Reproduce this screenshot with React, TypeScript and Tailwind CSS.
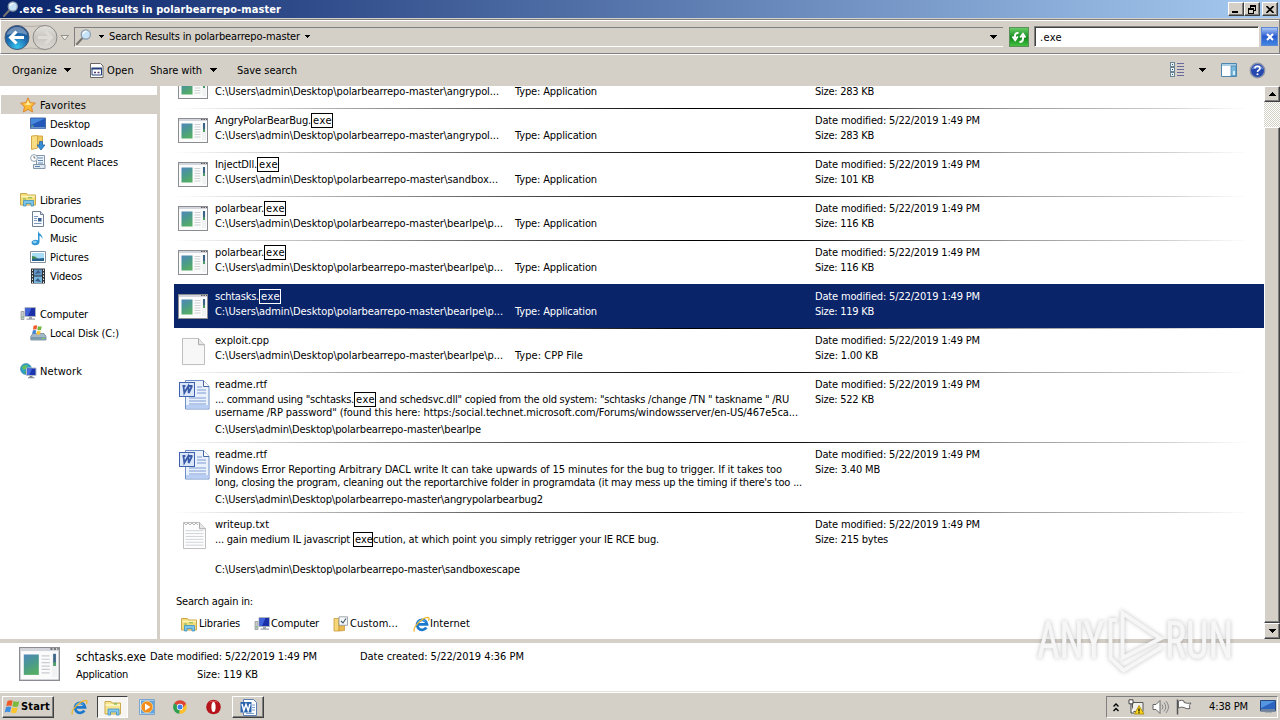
import { useLayoutEffect, useRef, type ReactNode } from "react";

/* Single line of text whose tracking is tuned so that it fills `w` pixels. */
function T({ w, children, className = "" }: { w?: number; children: string; className?: string }) {
  const ref = useRef<HTMLSpanElement>(null);
  useLayoutEffect(() => {
    const el = ref.current;
    if (!el || !w) return;
    el.style.letterSpacing = "0px";
    const natural = el.getBoundingClientRect().width;
    el.style.letterSpacing = `${(w - natural) / children.length}px`;
  }, [w, children]);
  return (
    <span ref={ref} className={`inline-block shrink-0 whitespace-pre ${className}`}>
      {children}
    </span>
  );
}

function Caret({ className = "" }: { className?: string }) {
  return (
    <svg width="7" height="4" viewBox="0 0 7 4" shapeRendering="crispEdges" className={`shrink-0 ${className}`}>
      <path d="M0 0h7L3.500 4z" fill="#000" />
    </svg>
  );
}

function AppIcon({ className = "" }: { className?: string }) {
  return (
    <svg viewBox="0 0 30 25" preserveAspectRatio="none" className={`shrink-0 ${className}`}>
      <defs>
        <linearGradient id="appg" x1="0" y1="0" x2="0.4" y2="1">
          <stop offset="0" stopColor="#4f86bd" />
          <stop offset="0.55" stopColor="#4a9a8c" />
          <stop offset="1" stopColor="#55ab68" />
        </linearGradient>
      </defs>
      <rect x="0.5" y="0.5" width="29" height="24" fill="#fbfbfb" stroke="#8b8d92" />
      <rect x="1" y="1" width="28" height="2" fill="#d3d6dc" />
      <path d="M23 1.500h1.500M25.500 1.500H27M28 1.500h1" stroke="#555" />
      <rect x="3.500" y="5.500" width="11" height="15" fill="url(#appg)" />
      <path d="M16.500 6.500h6M16.500 9h6M16.500 11.500h6M16.500 14h6M16.500 16.500h6M16.500 19h6" stroke="#c9ccd0" strokeWidth="0.9" />
      <rect x="24" y="5" width="4" height="17" fill="#f1f2f4" />
      <rect x="25" y="5" width="2" height="7" fill="#3c6488" />
      <rect x="25" y="11" width="2" height="3" fill="#4b9a68" />
    </svg>
  );
}

function FileIcon({ lines = false }: { lines?: boolean }) {
  return (
    <svg width="25" height="29" viewBox="0 0 25 30" preserveAspectRatio="none" className="shrink-0">
      <path d="M1.500 1.500h16l6 6.500v20.500h-22z" fill={lines ? "#fdfdfd" : "#f7f7f7"} stroke="#bdbdbd" />
      <path d="M17.500 1.500v6.500h6" fill="#e6e6e6" stroke="#a9a9a9" />
      {lines && (
        <>
          <path d="M3.500 10h18M3.500 13h18M3.500 16h18M3.500 19h18M3.500 22h18M3.500 25h18" stroke="#cfd3d8" />
          <path d="M2 2l2 2 2-2 2 2 2-2 2 2 2-2 2 2" stroke="#999" fill="none" strokeWidth="0.8" />
        </>
      )}
    </svg>
  );
}

function WordDoc() {
  return (
    <svg width="31" height="31" viewBox="0 0 31 31" className="shrink-0">
      <path d="M6.500 1.500h18l5.500 6v22.500h-23.500z" fill="#eaf1fc" stroke="#6f8fc6" />
      <path d="M7 26h22.500v3.500H7z" fill="#b9cff3" />
      <path d="M24.500 1.500v6h5.500" fill="#fff" stroke="#44659f" />
      <path d="M18 8h5M18 11h9M18 14h9M10 19h17M10 22h17M10 25h17" stroke="#7d9cd6" />
      <rect x="0.500" y="3.500" width="15" height="14" fill="#dce7fa" stroke="#3e62ac" />
      <path d="M3.500 7h3M9 7h4.500M4.500 7l.8 7 4-7 .4 7L13 7" fill="none" stroke="#3a5ba8" strokeWidth="1.800" />
    </svg>
  );
}

function Magnifier() {
  return (
    <svg width="16" height="16" viewBox="0 0 16 16" className="shrink-0">
      <path d="M1 15l5.500-6" stroke="#77736e" strokeWidth="2" strokeLinecap="round" />
      <circle cx="9.800" cy="5.500" r="4.600" fill="#c7e3f8" stroke="#8a9aab" strokeWidth="1.200" />
      <path d="M7 5a3 3 0 0 1 3.500-2.500" stroke="#fff" fill="none" strokeWidth="1.200" />
    </svg>
  );
}

function Star() {
  return (
    <svg width="16" height="16" viewBox="0 0 16 16" className="shrink-0">
      <path d="M8 .8l2.200 4.800 5.200.6-3.900 3.500 1.100 5.300L8 12.400 3.400 15l1.100-5.300L.6 6.200l5.200-.6z" fill="#fcb933" stroke="#d9822b" strokeWidth="0.900" />
      <path d="M8 3l1.400 3.500 3 .3-4 1.400-4.600-1.200 3-.5z" fill="#fff0a6" />
    </svg>
  );
}

function DesktopIcon() {
  return (
    <svg width="16" height="16" viewBox="0 0 16 16" className="shrink-0">
      <path d="M.5 2h15v10.500H.5z" fill="#2458b8" stroke="#4a6aa4" />
      <path d="M1 2.500h14L1 9z" fill="#4688dc" />
      <path d="M1 11h14v1.500H1z" fill="#6c94cc" />
      <path d="M1.500 10h2" stroke="#8cd070" />
    </svg>
  );
}

function DownloadsIcon() {
  return (
    <svg width="16" height="16" viewBox="0 0 16 16" className="shrink-0">
      <path d="M1.500 1l6-.5V13l-6 1.500z" fill="#f9dd84" stroke="#d2a848" />
      <path d="M7.500 1h5v9h-5z" fill="#f2c95e" stroke="#d2a848" />
      <path d="M9.500 6.500h3V10H15l-4 5-4-5h2.500z" fill="#3a8fd4" stroke="#2468a8" strokeWidth="0.800" />
    </svg>
  );
}

function RecentIcon() {
  return (
    <svg width="17" height="16" viewBox="0 0 17 16" className="shrink-0">
      <path d="M6.500 1.500h8v10h-8z" fill="#eef4fa" stroke="#8295ab" />
      <path d="M8 4h5M8 6.500h5M8 9h5" stroke="#5e86b3" />
      <circle cx="4" cy="4" r="3.400" fill="#fff" stroke="#8fa2b4" />
      <path d="M4 2v2h1.500" stroke="#555" fill="none" strokeWidth="0.800" />
      <path d="M3.500 10.500h11.500v4H3.500z" fill="#dfe9f2" stroke="#8295ab" />
      <path d="M5 12.500h5" stroke="#5e86b3" />
    </svg>
  );
}

function LibrariesIcon() {
  return (
    <svg width="16" height="15" viewBox="0 0 16 15" className="shrink-0">
      <path d="M.5 1.500h6l1 1.500h8v10H.5z" fill="#f3dc7a" stroke="#c9a94c" />
      <path d="M1 4.500h14" stroke="#fff4b8" strokeWidth="1.500" />
      <path d="M3 7h3M8 5.800h4" stroke="#79b551" />
      <path d="M3.500 14V8.500h10V14H11v-2.500H6V14z" fill="#7cc5e8" stroke="#3f8fc0" strokeWidth="0.800" />
    </svg>
  );
}

function DocumentIcon() {
  return (
    <svg width="16" height="16" viewBox="0 0 16 16" className="shrink-0">
      <path d="M2.500.5h8l3 3v12h-11z" fill="#fafcff" stroke="#6f7f92" />
      <path d="M10.500.5v3h3" fill="#d5deea" stroke="#6f7f92" />
      <path d="M4 5.500h4M4 7.500h3M4 9.500h3M4 12.500h7.500" stroke="#7c98bb" />
      <rect x="8" y="7" width="3.500" height="3.500" fill="#3a5f92" />
    </svg>
  );
}

function MusicIcon() {
  return (
    <svg width="16" height="16" viewBox="0 0 16 16" className="shrink-0">
      <path d="M8 .5c0 3 5 3.500 4.500 8.500C11.800 7 10.500 6 9.500 5.800V12c0 2-2 3.300-4.300 3.300S1.500 14 1.500 12.600 3.300 9.800 5.500 9.800c.9 0 1.700.2 2.500.5z" fill="#2f96d6" />
      <ellipse cx="4.800" cy="12" rx="2" ry="1.200" fill="#8fd0f2" />
    </svg>
  );
}

function PicturesIcon() {
  return (
    <svg width="16" height="16" viewBox="0 0 16 16" className="shrink-0">
      <path d="M.5 2.500h15v11H.5z" fill="#fff" stroke="#8492a0" />
      <path d="M2 4h12v8H2z" fill="#a8dcf4" />
      <path d="M2 8l4 1 3 .6 5-.6v3H2z" fill="#27628e" />
      <path d="M2 7l3 .5 2.500 2L2 10z" fill="#428b56" />
    </svg>
  );
}

function VideosIcon() {
  return (
    <svg width="16" height="16" viewBox="0 0 16 16" className="shrink-0">
      <path d="M1 .500h14v15H1z" fill="#2e3338" />
      <path d="M4 1.500h8v6H4z" fill="#6298c9" />
      <path d="M4 8.500h8v6.500H4z" fill="#76b7df" />
      <path d="M5 6l3-4 3 3zM5 13l3-3 3 4z" fill="#3e5d82" />
      <path d="M2.500 1.500v14M13.500 1.500v14" stroke="#e5e8ea" strokeDasharray="1.500 1.500" />
    </svg>
  );
}

function ComputerIcon() {
  return (
    <svg width="17" height="16" viewBox="0 0 17 16" className="shrink-0">
      <path d="M1 5.500h3v8H1z" fill="#c8ccce" stroke="#878d92" strokeWidth="0.700" />
      <path d="M1.800 11h1.400" stroke="#4db748" />
      <path d="M5 1.500h10.500v9H5z" fill="#1b2fa8" stroke="#aab2c0" />
      <path d="M5.500 2h6L8 10H5.500z" fill="#3f62d8" />
      <path d="M9 11h3v1.500H9zM6.500 12.500h8.500v1.300H6.500z" fill="#9da3aa" />
    </svg>
  );
}

function DiskIcon() {
  return (
    <svg width="17" height="16" viewBox="0 0 17 16" className="shrink-0">
      <path d="M3 8.500h11l2 3v3.500H.8v-3.500z" fill="#a3b7c6" stroke="#6f8594" strokeWidth="0.800" />
      <path d="M1 12h14.800v2.600H1z" fill="#7c9aac" />
      <path d="M12 13.300h2.500" stroke="#7ce05f" />
      <path d="M3.500 1q2-1.200 3.700-.3L6.500 4.500Q4.800 3.700 3 4.700z" fill="#ee5a2a" />
      <path d="M8 1q2 1 3.800.2L11 5q-2 .8-3.700-.2z" fill="#74b840" />
      <path d="M2.800 5.500q1.800-.8 3.500 0L5.500 9q-1.700-.8-3.400 0z" fill="#3f84d8" />
      <path d="M7.100 5.700q1.800 1 3.700.2L10 9.300q-1.800.8-3.700-.2z" fill="#f9c22e" />
    </svg>
  );
}

function NetworkIcon() {
  return (
    <svg width="17" height="16" viewBox="0 0 17 16" className="shrink-0">
      <circle cx="6" cy="6" r="5.500" fill="#2fa0c8" stroke="#3c7f9a" strokeWidth="0.600" />
      <path d="M2 3.500q3-2 5.500-1.500L6 6 3 7z" fill="#63c05b" />
      <path d="M4 8l3 1-1 2.300z" fill="#4aa848" />
      <path d="M6.500 5h9.500v7.500H6.500z" fill="#1b35b0" stroke="#b5bdca" />
      <path d="M7 5.500h5L9.500 12H7z" fill="#476ade" />
      <path d="M9.500 13h3v1.200h-3zM8 14.200h6.500v1H8z" fill="#7f878f" />
    </svg>
  );
}

function CustomIcon() {
  return (
    <svg width="17" height="16" viewBox="0 0 17 16" className="shrink-0">
      <path d="M1 2.500h5V15H1z" fill="#f6d676" stroke="#c99b3c" strokeWidth="0.800" />
      <path d="M6 4h5.500v10.500L6 15z" fill="#e8ba4c" stroke="#c99b3c" strokeWidth="0.800" />
      <path d="M6 .8h8.500v8.500H6z" fill="#f3f7fa" stroke="#8c9299" strokeWidth="0.800" />
      <path d="M8 5l2 2 3-4.500" fill="none" stroke="#456" strokeWidth="1.100" />
    </svg>
  );
}

function IEIcon() {
  return (
    <svg width="17" height="17" viewBox="0 0 17 17" className="shrink-0">
      <path d="M13.300 11.500a5 5 0 1 1 .7-3.200H5" fill="none" stroke="#1c78cc" strokeWidth="2.800" />
      <path d="M4.500 6.500a5 5 0 0 1 8-1" fill="none" stroke="#5db4ee" strokeWidth="1" />
      <path d="M1.500 15.500C-1 12 9 1.500 14.800 1.300c1.800 0 1.400 2 .6 3.400" fill="none" stroke="#efb72e" strokeWidth="1.300" />
    </svg>
  );
}

function WindowsFlag() {
  return (
    <svg width="17" height="16" viewBox="0 0 17 16" className="shrink-0">
      <path d="M3.500 2q2.800-1.500 5.200-.3L7.500 7Q5 5.800 2.200 7.300z" fill="#ef5b28" />
      <path d="M9.500 2q2.500 1.300 5.800.2L14 7.500q-3 1-5.600-.2z" fill="#7cba3f" />
      <path d="M2 8.200q2.600-1.300 5.200-.2L6 13.200Q3.500 12 .7 13.500z" fill="#3d8ee0" />
      <path d="M8.100 8.300q2.600 1.200 5.600.2l-1.300 5.200q-3 1-5.500-.2z" fill="#fac52c" />
    </svg>
  );
}

const raised =
  "border border-t-white border-l-white border-r-[#404040] border-b-[#404040] shadow-[inset_-1px_-1px_0_#808080] bg-[#d4d0c8]";

function Hit({ narrow = false, light = false }: { narrow?: boolean; light?: boolean }) {
  return (
    <span
      className={`-my-px flex h-[15px] shrink-0 items-center border pl-px leading-[13px] ${narrow ? "w-5" : "w-[22px]"} ${light ? "border-white" : "border-black"}`}
    >
      <T w={narrow ? 18 : 19}>exe</T>
    </span>
  );
}

function Divider() {
  return <div className="h-px w-[1074px] shrink-0 bg-[linear-gradient(90deg,transparent,#666_28%,#000_48%,#111_58%,#999_78%,#ccc_92%,transparent)]" />;
}

type FileEntry = { name?: string; nameW?: number; path: string; pathW: number; size: string; sizeW: number; app?: boolean; type?: string; typeW?: number; selected?: boolean };

const base = "C:\\Users\\admin\\Desktop\\polarbearrepo-master\\";
const files: FileEntry[] = [
  { path: base + "angrypol...", pathW: 284, size: "283 KB", sizeW: 59, app: true },
  { name: "AngryPolarBearBug.", nameW: 96, path: base + "angrypol...", pathW: 284, size: "283 KB", sizeW: 59, app: true },
  { name: "InjectDll.", nameW: 42, path: base + "sandbox...", pathW: 283, size: "101 KB", sizeW: 59, app: true },
  { name: "polarbear.", nameW: 49, path: base + "bearlpe\\p...", pathW: 288, size: "116 KB", sizeW: 59, app: true },
  { name: "polarbear.", nameW: 49, path: base + "bearlpe\\p...", pathW: 288, size: "116 KB", sizeW: 59, app: true },
  { name: "schtasks.", nameW: 44, path: base + "bearlpe\\p...", pathW: 288, size: "119 KB", sizeW: 59, app: true, selected: true },
  { name: "exploit.cpp", nameW: 54, path: base + "bearlpe\\p...", pathW: 288, size: "1.00 KB", sizeW: 63, type: "CPP File", typeW: 68 },
];

function Meta({ size, w, dated = true }: { size: string; w: number; dated?: boolean }) {
  return (
    <div className="flex flex-col items-start">
      {dated ? <T w={165}>Date modified: 5/22/2019 1:49 PM</T> : <div className="h-[15px]" />}
      <T w={w}>{`Size: ${size}`}</T>
    </div>
  );
}

function FileRow({ f }: { f: FileEntry }) {
  return (
    <div className={`flex h-11 shrink-0 flex-col ${f.selected ? "bg-[#0a246a] text-white" : ""}`}>
      {f.selected ? <div className="h-px shrink-0" /> : <Divider />}
      <div className="flex pt-1 leading-[15px]">
        <div className={`w-[41px] shrink-0 ${f.app ? "pt-[5px] pl-1" : "pt-1 pl-[7px]"}`}>
          {f.app ? <AppIcon className="h-[25px] w-[30px]" /> : <FileIcon />}
        </div>
        <div className="flex w-[300px] shrink-0 flex-col items-start">
          <div className="flex h-[15px] items-center">
            {f.name && <T w={f.nameW}>{f.name}</T>}
            {f.name && f.app && <Hit light={f.selected} />}
          </div>
          <T w={f.pathW}>{f.path}</T>
        </div>
        <div className="flex w-[300px] shrink-0 pt-[15px]">
          <T w={f.typeW ?? 82}>{`Type: ${f.type ?? "Application"}`}</T>
        </div>
        <Meta size={f.size} w={f.sizeW} dated={!!f.name} />
      </div>
    </div>
  );
}

function LongRow({ icon, name, nameW, size, sizeW, children }: { icon: ReactNode; name: string; nameW: number; size: string; sizeW: number; children: ReactNode }) {
  return (
    <div className="flex h-[70px] shrink-0 flex-col">
      <Divider />
      <div className="flex pt-1 leading-[15px]">
        <div className="w-[41px] shrink-0">{icon}</div>
        <div className="flex w-[600px] shrink-0 flex-col items-start">
          <T w={nameW}>{name}</T>
          {children}
        </div>
        <Meta size={size} w={sizeW} />
      </div>
    </div>
  );
}

type NavItem = { label: string; w: number; icon: ReactNode; top?: boolean; active?: boolean } | null;
const nav: NavItem[] = [
  { label: "Favorites", w: 46, icon: <Star />, top: true, active: true },
  { label: "Desktop", w: 40, icon: <DesktopIcon /> },
  { label: "Downloads", w: 53, icon: <DownloadsIcon /> },
  { label: "Recent Places", w: 68, icon: <RecentIcon /> },
  null,
  { label: "Libraries", w: 41, icon: <LibrariesIcon />, top: true },
  { label: "Documents", w: 54, icon: <DocumentIcon /> },
  { label: "Music", w: 27, icon: <MusicIcon /> },
  { label: "Pictures", w: 39, icon: <PicturesIcon /> },
  { label: "Videos", w: 32, icon: <VideosIcon /> },
  null,
  { label: "Computer", w: 48, icon: <ComputerIcon />, top: true },
  { label: "Local Disk (C:)", w: 69, icon: <DiskIcon /> },
  null,
  { label: "Network", w: 42, icon: <NetworkIcon />, top: true },
];

function TitleBar() {
  return (
    <div className="flex h-[18px] shrink-0 items-center bg-[linear-gradient(90deg,#0a246a,#a6caf0)] pr-0.5 pl-[3px] text-white">
      <Magnifier />
      <T w={262} className="pt-0.5 leading-[16px] font-bold">.exe - Search Results in polarbearrepo-master</T>
      <div className="ml-auto flex h-3.5">
        <div className={`flex w-4 items-end justify-center pb-0.5 ${raised}`}>
          <div className="mr-0.5 h-0.5 w-1.5 bg-black" />
        </div>
        <div className={`flex w-4 items-center justify-center ${raised}`}>
          <svg width="9" height="9" viewBox="0 0 9 9" shapeRendering="crispEdges">
            <path d="M2.500 3V.5h5v5H6M2 1h6" fill="none" stroke="#000" />
            <path d="M.5 3.500h5v5h-5zM0 4h6" fill="none" stroke="#000" />
          </svg>
        </div>
        <div className={`ml-0.5 flex w-4 items-center justify-center ${raised}`}>
          <svg width="8" height="7" viewBox="0 0 8 7">
            <path d="M.5 0l7 7M7.500 0l-7 7" stroke="#000" strokeWidth="1.600" />
          </svg>
        </div>
      </div>
    </div>
  );
}

function AddressBar() {
  return (
    <div className="mt-px flex h-[35px] w-full shrink-0 items-center border border-[#808080] border-l-white shadow-[inset_0_1px_0_#fff,0_1px_0_#fff]">
      <svg width="73" height="30" viewBox="0 0 73 30" className="shrink-0">
        <defs>
          <radialGradient id="back" cx="0.5" cy="0.9" r="0.9">
            <stop offset="0" stopColor="#35c4ee" />
            <stop offset="0.5" stopColor="#1d6fb2" />
            <stop offset="1" stopColor="#1a3f7c" />
          </radialGradient>
          <linearGradient id="fwd" x1="0" y1="0" x2="0" y2="1">
            <stop offset="0" stopColor="#e4e2dd" />
            <stop offset="0.5" stopColor="#c9c6c1" />
            <stop offset="1" stopColor="#dddad5" />
          </linearGradient>
        </defs>
        <path d="M16 3.500q14 2 28 0M16 27.500q14-3 28 0" stroke="#b3afa8" fill="none" />
        <circle cx="16" cy="15.500" r="12" fill="url(#back)" stroke="#4a5d77" />
        <path d="M5.500 13a10.800 10.800 0 0 1 21 0q-10-4-21 0z" fill="#fff" opacity="0.350" />
        <path d="M15.500 9.500l-6 6 6 6M10.500 15.500h12.500" stroke="#fff" strokeWidth="3" fill="none" />
        <circle cx="44" cy="15.500" r="12" fill="url(#fwd)" stroke="#8b8986" />
        <path d="M44.500 9.500l6 6-6 6M49.500 15.500H37" stroke="#dedbd6" strokeWidth="3" fill="none" />
        <path d="M60 13.500h7.500L63.700 18z" fill="#f0eee9" stroke="#8a8781" strokeWidth="0.900" />
      </svg>
      <div className="flex h-5 w-[929px] shrink-0 items-center border-t border-b border-l border-[#808080] border-b-white pl-px">
        <Magnifier />
        <Caret className="ml-[7px] h-[3px] w-[5px]" />
        <T w={191} className="ml-[5px] pt-px leading-[18px]">Search Results in polarbearrepo-master</T>
        <Caret className="ml-[5px] h-[3px] w-[5px]" />
        <Caret className="mr-[6px] ml-auto" />
      </div>
      <div className="ml-[6px] flex h-5 w-5 shrink-0 items-center justify-center border border-[#5c8f5a] bg-[linear-gradient(#66cc66,#118a1c_55%,#44c040)]">
        <svg width="16" height="16" viewBox="0 0 16 16">
          <path d="M7.500 4Q4 3.500 4 7v2M1.500 7.500L4.200 11l2.600-3.500" fill="none" stroke="#fff" strokeWidth="2" />
          <path d="M8.500 13Q12 13 12 9.500V7M9.200 8.500L12 5l2.500 3.500" fill="none" stroke="#fff" strokeWidth="2" />
        </svg>
      </div>
      <div className="ml-[5px] flex h-[21px] w-[225px] shrink-0 items-center border border-[#808080] border-r-white border-b-white bg-white pl-[5px] shadow-[inset_1px_1px_0_#404040]">
        <T w={22} className="pt-0.5 leading-[16px]">.exe</T>
      </div>
      <div className="ml-0.5 flex h-[19px] w-[17px] shrink-0 items-center justify-center border border-[#5f86d2] bg-[linear-gradient(#a9c7f5,#2b5ad0_50%,#3f86e0)]">
        <svg width="8" height="8" viewBox="0 0 8 8">
          <path d="M1 1l6 6M7 1L1 7" stroke="#fff" strokeWidth="2" />
        </svg>
      </div>
    </div>
  );
}

function Toolbar() {
  return (
    <div className="flex h-8 shrink-0 items-center pl-3 leading-[16px]">
      <T w={45} className="pt-0.5">Organize</T>
      <Caret className="ml-[7px]" />
      <svg width="15" height="15" viewBox="0 0 15 15" className="ml-[18px] shrink-0">
        <path d="M1.500 .5h10l2.500 2.500v11.500H1.500z" fill="#fff" stroke="#666" />
        <path d="M3 5.500h9.500v6.500H3z" fill="#fff" stroke="#23407c" />
        <path d="M2.500 5.500h10.500" stroke="#23407c" strokeWidth="2" />
        <path d="M5 9.500h2M8.500 9.500h2" stroke="#4a3a6c" strokeWidth="1.500" />
      </svg>
      <T w={27} className="ml-[3px] pt-0.5">Open</T>
      <T w={52} className="ml-[16px] pt-0.5">Share with</T>
      <Caret className="ml-[8px]" />
      <T w={60} className="ml-[20px] pt-0.5">Save search</T>
      <svg width="15" height="16" viewBox="0 0 15 16" className="ml-auto shrink-0" shapeRendering="crispEdges">
        <path d="M.5.500h4v4h-4zM.5 5.500h4v4h-4zM.5 10.500h4v4h-4z" fill="#e9f1f5" stroke="#6a8594" />
        <path d="M2 2h1v1H2zM2 7h1v1H2zM2 12h1v1H2z" fill="#285a78" />
        <path d="M7 1.500h7M7 4.500h7M7 7.500h7M7 10.500h7M7 13.500h7" stroke="#6969a0" />
      </svg>
      <Caret className="ml-[14px]" />
      <svg width="16" height="14" viewBox="0 0 16 14" className="ml-[15px] shrink-0">
        <path d="M.5.500h15v13H.5z" fill="#fdfeff" stroke="#4b87ae" />
        <path d="M1 1h14v2H1z" fill="#a9cfe6" />
        <path d="M10 3h5v10h-5z" fill="#79bade" stroke="#4b87ae" strokeWidth="0.800" />
        <path d="M12 8h2v4h-2z" fill="#d7eefa" />
      </svg>
      <svg width="17" height="17" viewBox="0 0 17 17" className="mr-[14px] ml-[12px] shrink-0">
        <circle cx="8.500" cy="8.500" r="7.200" fill="#2548b0" stroke="#8992a8" strokeWidth="1.400" />
        <path d="M2.800 7.500a6 6 0 0 1 11.400 0q-5.500-2.500-11.400 0z" fill="#7e9de4" opacity="0.800" />
        <path d="M6 6.500Q6 4.300 8.500 4.300T11 6.400Q11 7.600 9.500 8.200 8.500 8.700 8.500 10" fill="none" stroke="#fff" strokeWidth="1.600" />
        <circle cx="8.500" cy="12.300" r="1" fill="#fff" />
      </svg>
    </div>
  );
}

function ScrollBar() {
  return (
    <div className="flex w-4 shrink-0 flex-col">
      <div className={`flex h-4 shrink-0 items-center justify-center ${raised}`}>
        <Caret className="rotate-180" />
      </div>
      <div className="h-[25px] shrink-0 bg-[repeating-conic-gradient(#fff_0_25%,#d4d0c8_0_50%)] bg-[length:2px_2px]" />
      <div className={`flex-1 ${raised}`} />
      <div className={`flex h-4 shrink-0 items-center justify-center ${raised}`}>
        <Caret />
      </div>
    </div>
  );
}

function Results() {
  return (
    <div className="flex flex-1 flex-col overflow-hidden pl-[14px]">
      <div className="-mt-[22px] flex flex-col">
        {files.map((f, i) => (
          <FileRow key={i} f={f} />
        ))}
      </div>
      <LongRow name="readme.rtf" nameW={52} size="522 KB" sizeW={59} icon={<div className="pt-0.5 pl-[5px]"><WordDoc /></div>}>
        <div className="flex h-3.5 items-center">
          <T w={139}>... command using "schtasks.</T>
          <Hit />
          <T w={413}> and schedsvc.dll" copied from the old system: "schtasks /change /TN " taskname " /RU</T>
        </div>
        <T w={583} className="h-[13px] leading-[13px]">username /RP password" (found this here: https:/social.technet.microsoft.com/Forums/windowsserver/en-US/467e5ca...</T>
        <T w={266} className="mt-[3px]">{base + "bearlpe"}</T>
      </LongRow>
      <LongRow name="readme.rtf" nameW={52} size="3.40 MB" sizeW={65} icon={<div className="pt-0.5 pl-[5px]"><WordDoc /></div>}>
        <T w={567} className="h-3.5 leading-[15px]">Windows Error Reporting Arbitrary DACL write It can take upwards of 15 minutes for the bug to trigger. If it takes too</T>
        <T w={587} className="h-[13px] leading-[13px]">long, closing the program, cleaning out the reportarchive folder in programdata (it may mess up the timing if there's too ...</T>
        <T w={328} className="mt-[3px]">{base + "angrypolarbearbug2"}</T>
      </LongRow>
      <LongRow name="writeup.txt" nameW={54} size="215 bytes" sizeW={73} icon={<div className="pt-1 pl-[8px]"><FileIcon lines /></div>}>
        <div className="flex h-3.5 items-center">
          <T w={138}>... gain medium IL javascript </T>
          <Hit narrow />
          <T w={286}>cution, at which point you simply retrigger your IE RCE bug.</T>
        </div>
        <T w={305} className="mt-[16px]">{base + "sandboxescape"}</T>
      </LongRow>
      <div className="mt-3 flex h-4 items-center pl-0.5 leading-[16px]">
        <T w={77}>Search again in:</T>
      </div>
      <div className="mt-1.5 flex h-4 items-center pl-[7px] leading-[16px]">
        <LibrariesIcon />
        <T w={41} className="ml-0.5">Libraries</T>
        <div className="ml-[14px] flex items-center"><ComputerIcon /></div>
        <T w={48}>Computer</T>
        <div className="ml-[14px] flex items-center"><CustomIcon /></div>
        <T w={48}>Custom...</T>
        <div className="ml-[15px] flex items-center"><IEIcon /></div>
        <T w={40}>Internet</T>
      </div>
    </div>
  );
}

function Details() {
  return (
    <div className="flex h-[49px] shrink-0 border-b border-[#e4e1dc] bg-white pl-[19px] leading-[18px]">
      <AppIcon className="mt-[4px] h-[34px] w-[41px]" />
      <div className="ml-4 flex flex-col pt-[5px]">
        <div className="flex h-[18px] items-center">
          <T w={70} className="text-[12px]">schtasks.exe</T>
          <T w={167} className="ml-[4px]">Date modified: 5/22/2019 1:49 PM</T>
          <T w={164} className="ml-[43px]">Date created: 5/22/2019 4:36 PM</T>
        </div>
        <div className="flex items-center">
          <T w={52}>Application</T>
          <T w={61} className="ml-[69px]">Size: 119 KB</T>
        </div>
      </div>
    </div>
  );
}

function Taskbar() {
  return (
    <div className="flex flex-1 items-center bg-[#d4d0c8] pt-0.5 pl-0.5 shadow-[inset_0_1px_0_#fff]">
      <div className={`flex h-[22px] w-[52px] shrink-0 items-center pl-px ${raised}`}>
        <WindowsFlag />
        <T w={29} className="pt-px font-bold">Start</T>
      </div>
      <div className="ml-[17px] flex"><IEIcon /></div>
      <div className="ml-[9px] flex h-[22px] w-[31px] items-center justify-center border border-[#404040] border-r-white border-b-white bg-[#f6f5f2]">
        <svg width="18" height="17" viewBox="0 0 18 17">
          <path d="M1 2.500h6l1 1.500h8.500v11H1z" fill="#f7e48e" stroke="#c9a94c" />
          <path d="M1.500 6h14.500" stroke="#fff8ce" strokeWidth="1.500" />
          <path d="M10 5h3" stroke="#4bab4f" />
          <path d="M4 16v-6h11v6h-2.500v-3h-6v3z" fill="#86c8ec" stroke="#3f8fc0" strokeWidth="0.800" />
        </svg>
      </div>
      <svg width="16" height="16" viewBox="0 0 16 16" className="ml-[11px] shrink-0">
        <path d="M.5.500h15v15H.5z" fill="#dbe9f6" stroke="#7aa5cc" />
        <path d="M2 1.500h13v13H2z" fill="#62a3dc" />
        <circle cx="8" cy="8" r="5.800" fill="#f28c1b" stroke="#fbd08c" strokeWidth="0.800" />
        <path d="M6 4.500L11.500 8 6 11.500z" fill="#fff" />
      </svg>
      <svg width="14" height="14" viewBox="0 0 14 14" className="ml-[18px] shrink-0">
        <path d="M7 7L1.200 3.500A6.800 6.800 0 0 1 13 3.800z" fill="#dd4436" />
        <path d="M7 7L1.200 3.300A6.800 6.800 0 0 0 6.500 13.800z" fill="#2f9e4f" />
        <path d="M7 7l6-3.200A6.800 6.800 0 0 1 6.500 13.800z" fill="#fbc02e" />
        <path d="M7 3.700h6l-3 4z" fill="#dd4436" />
        <circle cx="7" cy="7" r="3.200" fill="#fff" />
        <circle cx="7" cy="7" r="2.500" fill="#3f7fe8" />
      </svg>
      <svg width="15" height="16" viewBox="0 0 15 16" className="ml-[19px] shrink-0">
        <circle cx="7.500" cy="8" r="7.300" fill="#b5141b" />
        <path d="M2.500 3.800a7 7 0 0 1 10 0q-5-2-10 0z" fill="#e06366" />
        <ellipse cx="7.500" cy="8" rx="2.100" ry="5" fill="#fff" />
      </svg>
      <div className={`ml-[11px] flex h-[22px] w-8 items-center justify-center ${raised}`}>
        <svg width="17" height="17" viewBox="0 0 17 17">
          <path d="M3.500.5h10l3 3v13h-13z" fill="#fff" stroke="#5b7fb5" />
          <path d="M12 6h3M12 8.500h3M12 11h3M6 14.500h8" stroke="#7c9fce" />
          <path d="M.5 3h11v10.500H.5z" fill="#2b64ae" />
          <path d="M2 5l1.800 6.500L6 5.500l2.200 6L10 5" fill="none" stroke="#fff" strokeWidth="1.500" />
        </svg>
      </div>
      <div className="mr-0.5 ml-auto flex h-[22px] w-[172px] shrink-0 items-center border border-[#808080] border-r-white border-b-white pl-1.5">
        <svg width="6" height="9" viewBox="0 0 6 9" className="shrink-0">
          <path d="M.5 3.500L3 1l2.500 2.500M.5 8L3 5.500 5.500 8" fill="none" stroke="#000" strokeWidth="1.400" />
        </svg>
        <svg width="17" height="16" viewBox="0 0 17 16" className="ml-[9px] shrink-0">
          <path d="M4.500 3.500H15v9H4.500z" fill="#f1efe9" stroke="#555" />
          <path d="M1 .8h4v4H1zM3 5v9h3" fill="#fff" stroke="#444" />
          <path d="M11 6.500l5 8.500H6.500z" fill="#f9d51c" stroke="#a28400" strokeWidth="0.800" />
          <path d="M11 9.500v3M11 13.300v1" stroke="#000" strokeWidth="1.200" />
        </svg>
        <svg width="17" height="16" viewBox="0 0 17 16" className="ml-[7px] shrink-0">
          <path d="M1 5.500h3l4-4v13l-4-4H1z" fill="#fff" stroke="#666" />
          <path d="M10 5.500q2 2.500 0 5M12 3.500q3.500 4.500 0 9M14 2q5 6 0 12" fill="none" stroke="#888" />
        </svg>
        <svg width="17" height="16" viewBox="0 0 17 16" className="ml-[7px] shrink-0">
          <path d="M1.500.5v15" stroke="#555" strokeWidth="1.500" />
          <path d="M2.500 2q3-1.500 5.500 0v1.500q4 1.500 7 .5-3 2.500-1 5.500-3 1-6-1Q5 7.500 2.500 9z" fill="#fff" stroke="#666" />
        </svg>
        <T w={39} className="ml-[16px] pt-px">4:38 PM</T>
        <svg width="16" height="14" viewBox="0 0 16 14" className="ml-[12px] shrink-0">
          <path d="M.5.500h15v10.500H.5z" fill="#2a64c0" stroke="#26487e" />
          <path d="M1 1h14L1 8z" fill="#5596e2" />
          <path d="M1 9.500h14v1H1zM5 12h7" fill="#b6c7d8" stroke="#6d7f92" strokeWidth="0.800" />
        </svg>
      </div>
    </div>
  );
}

function Watermark() {
  return (
    <svg
      width="204"
      height="72"
      viewBox="0 0 204 72"
      className="pointer-events-none absolute top-[604px] left-[1033px] [filter:drop-shadow(0_0_2px_rgba(0,0,0,0.25))]"
    >
      <g fill="#f6f6f6" stroke="#f6f6f6" strokeWidth="0.6" fontFamily="Roboto, sans-serif" fontSize="51">
        <text x="4" y="54" textLength="67" lengthAdjust="spacingAndGlyphs">ANY</text>
        <text x="132" y="54" textLength="68" lengthAdjust="spacingAndGlyphs">RUN</text>
      </g>
      <g fill="none" stroke="#f6f6f6" strokeWidth="4">
        <path d="M89.500 9v45l38-19.500z" />
        <path d="M84 16H77.500v38l13 12.500L129 43" />
      </g>
    </svg>
  );
}

export default function App() {
  return (
    <div className="relative flex h-[720px] w-[1280px] flex-col overflow-hidden bg-[#d4d0c8] font-['DejaVu_Sans_Condensed','DejaVu_Sans',sans-serif] text-[11px] text-black [font-stretch:condensed]">
      <TitleBar />
      <AddressBar />
      <Toolbar />
      <div className="flex h-[553px] shrink-0 bg-white">
        <div className="flex w-[157px] shrink-0 flex-col pt-[9px] pl-px">
          {nav.map((n, i) =>
            n ? (
              <div key={i} className={`flex h-[19px] items-center ${n.top ? "pl-[19px]" : "pl-[29px]"} ${n.active ? "bg-[#d4d0c8]" : ""}`}>
                <div className="w-5">{n.icon}</div>
                <T w={n.w} className="pt-0.5 leading-[17px]">{n.label}</T>
              </div>
            ) : (
              <div key={i} className="h-[19px]" />
            ),
          )}
        </div>
        <div className="w-[3px] shrink-0 bg-[#d4d0c8]" />
        <Results />
        <ScrollBar />
      </div>
      <div className="h-1 shrink-0 bg-[#d4d0c8]" />
      <Details />
      <Taskbar />
      <Watermark />
    </div>
  );
}
